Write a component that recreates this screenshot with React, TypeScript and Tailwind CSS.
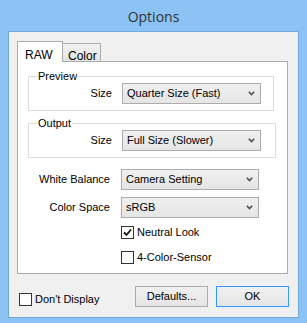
import React from "react";

function Chevron() {
  return (
    <svg width="7" height="5" viewBox="0 0 7 5" className="shrink-0">
      <path d="M0.8 0.8 L3.5 3.6 L6.2 0.8" fill="none" stroke="#505050" strokeWidth="1.6" />
    </svg>
  );
}

function Combo({ value, className }: { value: string; className: string }) {
  return (
    <div
      className={`flex h-[21px] items-center justify-between border border-[#acacac] bg-gradient-to-b from-[#f0f0f0] to-[#e5e5e5] pl-[4px] pr-[5px] ${className}`}
    >
      <span className="leading-none">{value}</span>
      <Chevron />
    </div>
  );
}

function CheckBox({ checked }: { checked?: boolean }) {
  return (
    <div className="flex h-[13px] w-[13px] shrink-0 items-center justify-center border border-[#333333] bg-white">
      {checked && (
        <svg width="9" height="9" viewBox="0 0 9 9">
          <path d="M1 4.5 L3.5 7 L8 1.5" fill="none" stroke="#111" strokeWidth="1.8" />
        </svg>
      )}
    </div>
  );
}

export default function App() {
  return (
    <div
      className="flex h-[323px] w-[307px] flex-col bg-[#8ac3f4] text-[11px] text-black"
      style={{ fontFamily: '"Liberation Sans", Arial, sans-serif' }}
    >
      {/* Title bar */}
      <div
        className="flex h-[31px] shrink-0 items-center justify-center pt-[1px] text-[14px] text-[#333333]"
        style={{ fontFamily: '"Open Sans", sans-serif' }}
      >
        Options
      </div>

      {/* Client area */}
      <div className="mx-[8px] flex h-[287px] w-[291px] flex-col border border-[#6fa8db] bg-[#f0f0f0] pl-[8px] pt-[9px]">
        {/* Tabs */}
        <div className="flex h-[20px] items-end">
          <div className="relative z-10 -mb-[1px] flex h-[21px] w-[46px] items-start border border-b-0 border-[#acacac] bg-white pl-[7px] pt-[4px] text-[12px]">
            RAW
          </div>
          <div className="flex h-[18px] w-[38px] items-start border border-l-0 border-b-0 border-[#acacac] bg-gradient-to-b from-[#f0f0f0] to-[#e5e5e5] pl-[5px] pt-[3px] text-[12px]">
            Color
          </div>
        </div>

        {/* Tab panel */}
        <div className="flex h-[213px] w-[271px] flex-col border border-[#acacac] bg-white pl-[10px] pt-[7px]">
          <fieldset className="w-[246px] border border-[#dcdcdc] pb-[6px]">
            <legend className="ml-[8px] px-[1px] leading-[14px]">Preview</legend>
            <div className="flex items-center">
              <span className="w-[83px] text-right">Size</span>
              <Combo value="Quarter Size (Fast)" className="ml-[10px] w-[139px]" />
            </div>
          </fieldset>

          <fieldset className="mt-[5px] w-[248px] border border-[#dcdcdc] pb-[6px]">
            <legend className="ml-[8px] px-[1px] leading-[14px]">Output</legend>
            <div className="flex items-center">
              <span className="w-[83px] text-right">Size</span>
              <Combo value="Full Size (Slower)" className="ml-[10px] w-[139px]" />
            </div>
          </fieldset>

          <div className="mt-[11px] flex items-center">
            <span className="w-[82px] text-right">White Balance</span>
            <Combo value="Camera Setting" className="ml-[11px] w-[138px]" />
          </div>
          <div className="mt-[7px] flex items-center">
            <span className="w-[82px] text-right">Color Space</span>
            <Combo value="sRGB" className="ml-[11px] w-[138px]" />
          </div>

          <div className="ml-[93px] mt-[8px] flex h-[13px] items-center gap-[3px] leading-[13px]">
            <CheckBox checked />
            <span>Neutral Look</span>
          </div>
          <div className="ml-[93px] mt-[12px] flex h-[13px] items-center gap-[3px] leading-[13px]">
            <CheckBox />
            <span>4-Color-Sensor</span>
          </div>
        </div>

        {/* Bottom row */}
        <div className="mt-[12px] flex items-start pr-[9px]">
          <div className="ml-[2px] mt-[7px] flex h-[13px] items-center gap-[3px] leading-[13px]">
            <CheckBox />
            <span>Don't Display</span>
          </div>
          <div className="ml-auto flex gap-[8px]">
            <button className="flex h-[21px] w-[73px] items-center justify-center border border-[#acacac] bg-gradient-to-b from-[#f0f0f0] to-[#e5e5e5]">
              Defaults...
            </button>
            <button className="flex h-[21px] w-[73px] items-center justify-center border border-[#3399ff] bg-gradient-to-b from-[#f0f0f0] to-[#e5e5e5]">
              OK
            </button>
          </div>
        </div>
      </div>
    </div>
  );
}
